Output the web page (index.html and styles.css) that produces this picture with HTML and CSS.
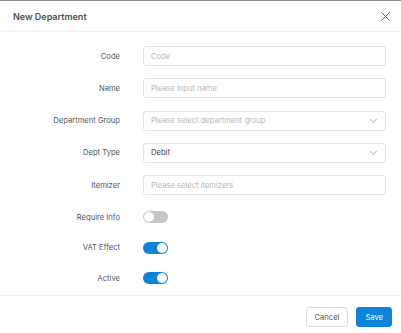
FILE: index.html
```html
<!DOCTYPE html>
<html lang="en">
  <head>
    <title>New Department</title>
    <meta charset="UTF-8">
    <link rel="stylesheet" href="styles.css">
  </head>
  <body>
    <div class="modal">
      <header class="modal-header">
        <h1>New Department</h1>
        <span class="close">
          <svg width="9" height="9" viewBox="0 0 9 9"><path d="M0.5 0.5 L8.5 8.5 M8.5 0.5 L0.5 8.5" stroke="#666" stroke-width="1" fill="none"/></svg>
        </span>
      </header>

      <form class="modal-body">
        <div class="row">
          <label>Code</label>
          <div class="field placeholder">Code</div>
        </div>
        <div class="row">
          <label>Name</label>
          <div class="field placeholder">Please input name</div>
        </div>
        <div class="row">
          <label>Department Group</label>
          <div class="field select placeholder">Please select department group<span class="chevron"></span></div>
        </div>
        <div class="row">
          <label>Dept Type</label>
          <div class="field select">Debit<span class="chevron"></span></div>
        </div>
        <div class="row">
          <label>Itemizer</label>
          <div class="field placeholder">Please select itemizers</div>
        </div>

        <div class="row switch-row first">
          <label>Require Info</label>
          <span class="switch"></span>
        </div>
        <div class="row switch-row">
          <label>VAT Effect</label>
          <span class="switch on"></span>
        </div>
        <div class="row switch-row">
          <label>Active</label>
          <span class="switch on"></span>
        </div>
      </form>

      <footer class="modal-footer">
        <button class="btn">Cancel</button>
        <button class="btn primary">Save</button>
      </footer>
    </div>
  </body>
</html>
```

FILE: styles.css
```css
html, body {
  margin: 0;
  padding: 0;
}

body {
  font-family: Inter, sans-serif;
  background: #fff;
}

.modal {
  width: 401px;
  height: 333px;
  box-sizing: border-box;
  border-top: 1px solid #8a8a8a;
  display: flex;
  flex-direction: column;
}

.modal-header {
  height: 30px;
  display: flex;
  align-items: center;
  justify-content: space-between;
  padding: 0 11px 0 13px;
  border-bottom: 1px solid #f0f0f0;
}

.modal-header h1 {
  margin: 0;
  font-size: 9px;
  font-weight: 600;
  color: #505050;
}

.close {
  display: flex;
}

.modal-body {
  flex: 1;
  padding-top: 14px;
  display: flex;
  flex-direction: column;
  gap: 12.3px;
}

.row {
  display: grid;
  grid-template-columns: 120px 243px;
  column-gap: 23px;
  align-items: center;
}

.row label {
  text-align: right;
  font-size: 7.6px;
  color: #555;
}

.field {
  height: 20px;
  box-sizing: border-box;
  border: 1px solid #e3e3e3;
  border-radius: 3px;
  padding: 0 7px;
  display: flex;
  align-items: center;
  font-size: 7.6px;
  color: #444;
}

.field.placeholder {
  color: #b8b8b8;
}

.field.select {
  justify-content: space-between;
}

.chevron {
  width: 4px;
  height: 4px;
  border-right: 1px solid #c4c4c4;
  border-bottom: 1px solid #c4c4c4;
  transform: rotate(45deg);
  margin: -3px 2px 0 0;
}

.switch-row.first {
  margin-top: 4px;
}

.switch-row + .switch-row {
  margin-top: 6px;
}

.switch {
  position: relative;
  width: 25px;
  height: 12px;
  border-radius: 6px;
  background: #c6c6c6;
}

.switch::after {
  content: "";
  position: absolute;
  top: 1px;
  left: 1px;
  width: 10px;
  height: 10px;
  border-radius: 50%;
  background: #fff;
}

.switch.on {
  background: #0d84d8;
}

.switch.on::after {
  left: 14px;
}

.modal-footer {
  height: 32px;
  border-top: 1px solid #f0f0f0;
  display: flex;
  justify-content: flex-end;
  align-items: center;
  gap: 8px;
  padding: 5px 9px 0 0;
}

.btn {
  height: 20px;
  padding: 0 8px;
  border: 1px solid #dcdcdc;
  border-radius: 3px;
  background: #fff;
  color: #555;
  font-family: Inter, sans-serif;
  font-size: 7.6px;
}

.btn.primary {
  background: #0d84d8;
  border-color: #0d84d8;
  color: #fff;
}
```
